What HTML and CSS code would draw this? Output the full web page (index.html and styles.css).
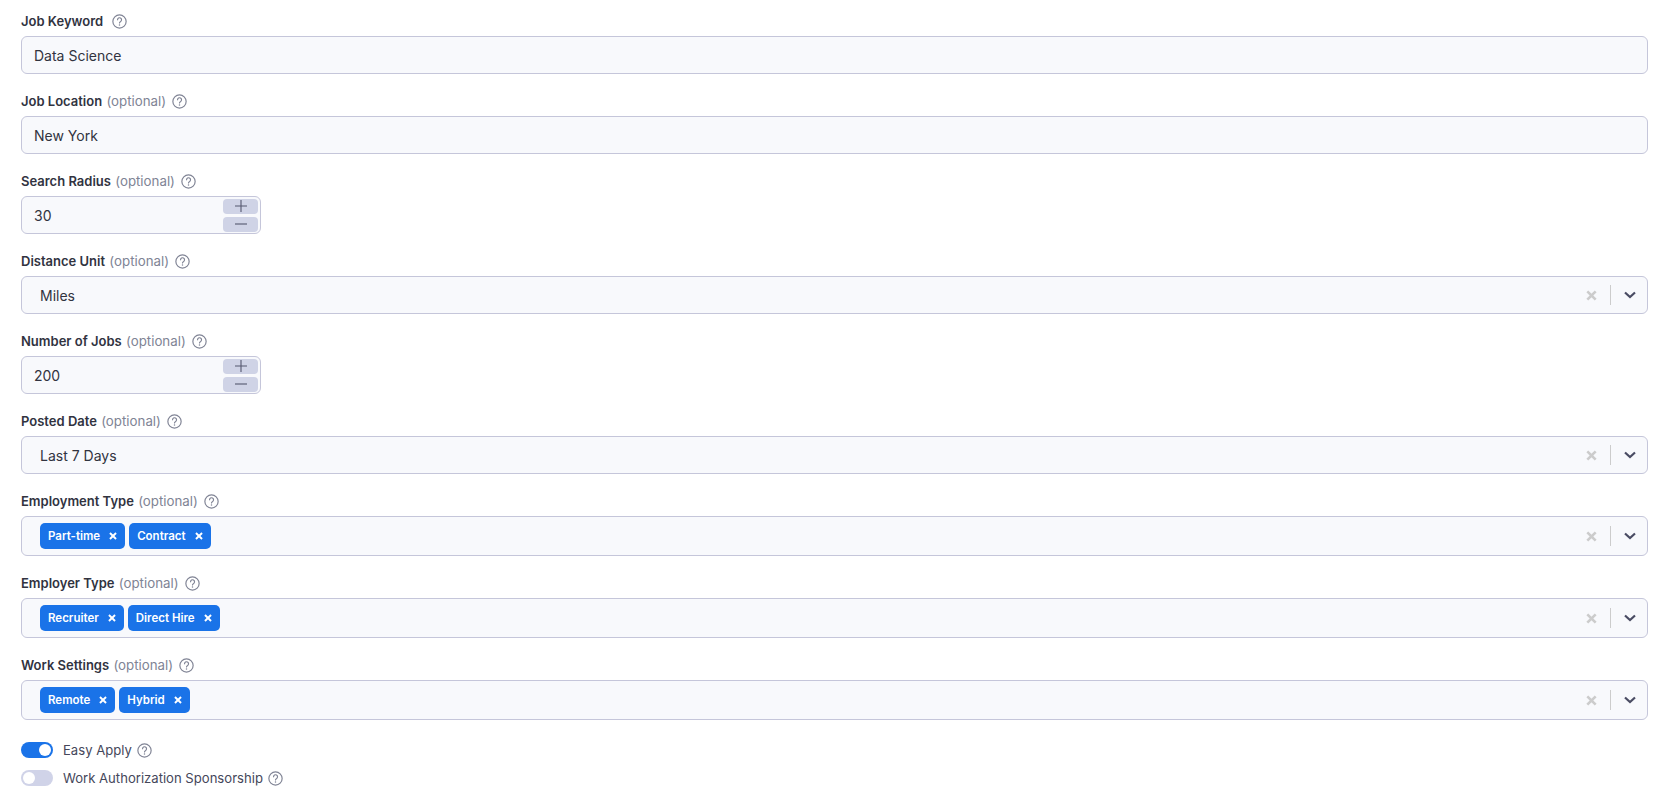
FILE: index.html
```html
<!DOCTYPE html>
<html lang="en">
<head>
    <meta charset="UTF-8">
    <title>Job Search</title>
    <link rel="stylesheet" href="styles.css">
</head>
<body>
    <svg class="icon-defs" width="0" height="0">
        <symbol id="help" viewBox="0 0 14 14">
            <circle cx="7" cy="7" r="6.2" fill="none" stroke="currentColor" stroke-width="1.1"/>
            <path d="M5.2 5.4a1.85 1.85 0 1 1 2.9 1.5c-.7.5-1.1.8-1.1 1.5" fill="none" stroke="currentColor" stroke-width="1.1" stroke-linecap="round"/>
            <circle cx="7" cy="10.3" r=".7" fill="currentColor"/>
        </symbol>
        <symbol id="cross" viewBox="0 0 10 10">
            <path d="M1.2 1.2l7.6 7.6M8.8 1.2l-7.6 7.6" fill="none" stroke="currentColor" stroke-width="2.4"/>
        </symbol>
        <symbol id="chevron" viewBox="0 0 12 8">
            <path d="M1 1.5l5 4.5 5-4.5" fill="none" stroke="currentColor" stroke-width="2.2"/>
        </symbol>
        <symbol id="plus" viewBox="0 0 12 12">
            <path d="M0 6h12M6 0v12" fill="none" stroke="currentColor" stroke-width="1.1"/>
        </symbol>
        <symbol id="minus" viewBox="0 0 12 12">
            <path d="M0 6h12" fill="none" stroke="currentColor" stroke-width="1.1"/>
        </symbol>
    </svg>

    <form class="job-form">
        <div class="form-group">
            <label class="field-label">Job Keyword <svg class="help help-wide"><use href="#help"/></svg></label>
            <div class="text-box">Data Science</div>
        </div>

        <div class="form-group">
            <label class="field-label">Job Location <span class="optional">(optional)</span> <svg class="help"><use href="#help"/></svg></label>
            <div class="text-box">New York</div>
        </div>

        <div class="form-group">
            <label class="field-label">Search Radius <span class="optional">(optional)</span> <svg class="help"><use href="#help"/></svg></label>
            <div class="text-box number-box">
                <span>30</span>
                <div class="stepper">
                    <span class="step"><svg class="step-icon"><use href="#plus"/></svg></span>
                    <span class="step"><svg class="step-icon"><use href="#minus"/></svg></span>
                </div>
            </div>
        </div>

        <div class="form-group">
            <label class="field-label">Distance Unit <span class="optional">(optional)</span> <svg class="help"><use href="#help"/></svg></label>
            <div class="select-box">
                <div class="select-value">Miles</div>
                <div class="select-controls">
                    <svg class="clear"><use href="#cross"/></svg>
                    <span class="divider"></span>
                    <svg class="chevron"><use href="#chevron"/></svg>
                </div>
            </div>
        </div>

        <div class="form-group">
            <label class="field-label">Number of Jobs <span class="optional">(optional)</span> <svg class="help"><use href="#help"/></svg></label>
            <div class="text-box number-box">
                <span>200</span>
                <div class="stepper">
                    <span class="step"><svg class="step-icon"><use href="#plus"/></svg></span>
                    <span class="step"><svg class="step-icon"><use href="#minus"/></svg></span>
                </div>
            </div>
        </div>

        <div class="form-group">
            <label class="field-label">Posted Date <span class="optional">(optional)</span> <svg class="help"><use href="#help"/></svg></label>
            <div class="select-box">
                <div class="select-value">Last 7 Days</div>
                <div class="select-controls">
                    <svg class="clear"><use href="#cross"/></svg>
                    <span class="divider"></span>
                    <svg class="chevron"><use href="#chevron"/></svg>
                </div>
            </div>
        </div>

        <div class="form-group group-multi">
            <label class="field-label">Employment Type <span class="optional">(optional)</span> <svg class="help"><use href="#help"/></svg></label>
            <div class="select-box multi">
                <div class="chips">
                    <span class="chip">Part-time <svg class="chip-x"><use href="#cross"/></svg></span>
                    <span class="chip">Contract <svg class="chip-x"><use href="#cross"/></svg></span>
                </div>
                <div class="select-controls">
                    <svg class="clear"><use href="#cross"/></svg>
                    <span class="divider"></span>
                    <svg class="chevron"><use href="#chevron"/></svg>
                </div>
            </div>
        </div>

        <div class="form-group group-multi">
            <label class="field-label">Employer Type <span class="optional">(optional)</span> <svg class="help"><use href="#help"/></svg></label>
            <div class="select-box multi">
                <div class="chips">
                    <span class="chip">Recruiter <svg class="chip-x"><use href="#cross"/></svg></span>
                    <span class="chip">Direct Hire <svg class="chip-x"><use href="#cross"/></svg></span>
                </div>
                <div class="select-controls">
                    <svg class="clear"><use href="#cross"/></svg>
                    <span class="divider"></span>
                    <svg class="chevron"><use href="#chevron"/></svg>
                </div>
            </div>
        </div>

        <div class="form-group group-multi">
            <label class="field-label">Work Settings <span class="optional">(optional)</span> <svg class="help"><use href="#help"/></svg></label>
            <div class="select-box multi">
                <div class="chips">
                    <span class="chip">Remote <svg class="chip-x"><use href="#cross"/></svg></span>
                    <span class="chip">Hybrid <svg class="chip-x"><use href="#cross"/></svg></span>
                </div>
                <div class="select-controls">
                    <svg class="clear"><use href="#cross"/></svg>
                    <span class="divider"></span>
                    <svg class="chevron"><use href="#chevron"/></svg>
                </div>
            </div>
        </div>

        <div class="toggles">
            <div class="toggle-row">
                <span class="toggle on"></span>
                <span>Easy Apply</span>
                <svg class="help"><use href="#help"/></svg>
            </div>
            <div class="toggle-row">
                <span class="toggle"></span>
                <span>Work Authorization Sponsorship</span>
                <svg class="help"><use href="#help"/></svg>
            </div>
        </div>
    </form>
</body>
</html>
```

FILE: styles.css
```css
* {
    margin: 0;
    padding: 0;
    box-sizing: border-box;
}

body {
    font-family: Inter, "Noto Sans", sans-serif;
    background: white;
    color: #31333f;
    font-size: 14px;
    height: 791px;
    overflow: hidden;
}

.icon-defs {
    display: block;
    height: 0;
}

.job-form {
    padding: 11px 6px 0 21px;
}

.form-group {
    margin-bottom: 17px;
}

.field-label {
    display: flex;
    align-items: center;
    height: 20px;
    margin-bottom: 5px;
    font-size: 13px;
    font-weight: 600;
    white-space: pre;
}

.optional {
    font-size: 13.3px;
    font-weight: 400;
    color: #808495;
    margin-left: 1px;
}

.help {
    width: 15px;
    height: 15px;
    margin-left: 6px;
    color: #808495;
    flex: none;
}

.help-wide {
    margin-left: 6px;
}

.text-box,
.select-box {
    display: flex;
    align-items: center;
    background: #f8f9fc;
    border: 1px solid #c5c6da;
    border-radius: 6px;
    height: 38px;
}

.text-box {
    padding-left: 12px;
}

.number-box {
    width: 240px;
    justify-content: space-between;
    padding-right: 2px;
}

.stepper {
    display: flex;
    flex-direction: column;
    gap: 3px;
}

.step {
    display: flex;
    align-items: center;
    justify-content: center;
    width: 35px;
    height: 15px;
    background: #cfd3e6;
    border-radius: 4px;
    color: #55586e;
}

.step-icon {
    width: 12px;
    height: 12px;
}

.select-box {
    justify-content: space-between;
    padding-right: 11px;
}

.select-box.multi {
    height: 40px;
}

.select-value {
    padding-left: 18px;
}

.select-controls {
    display: flex;
    align-items: center;
}

.clear {
    width: 11px;
    height: 11px;
    color: #cccccc;
}

.divider {
    width: 1px;
    height: 20px;
    background: #cccccc;
    margin: 0 13px;
}

.chevron {
    width: 12px;
    height: 8px;
    color: #4a4c63;
}

.chips {
    display: flex;
    gap: 4px;
    padding-left: 18px;
}

.chip {
    display: flex;
    align-items: center;
    justify-content: space-between;
    height: 26px;
    padding: 0 8px;
    gap: 9px;
    background: #1a73e8;
    border-radius: 5px;
    color: white;
    font-size: 11.5px;
    font-weight: 600;
}

.chip-x {
    width: 8px;
    height: 8px;
}

.toggles {
    display: flex;
    flex-direction: column;
    gap: 8px;
    margin-top: 20px;
}

.toggle-row {
    display: flex;
    align-items: center;
    gap: 10px;
    height: 20px;
    font-size: 13.1px;
    color: #45475a;
}

.toggle-row .help {
    margin-left: -5px;
}

.toggle {
    width: 32px;
    height: 16px;
    border-radius: 8px;
    background: #d0d3e8;
    position: relative;
}

.toggle::after {
    content: '';
    position: absolute;
    top: 2px;
    left: 2px;
    width: 12px;
    height: 12px;
    border-radius: 50%;
    background: white;
}

.toggle.on {
    background: #1a73e8;
}

.toggle.on::after {
    left: 18px;
}
```
